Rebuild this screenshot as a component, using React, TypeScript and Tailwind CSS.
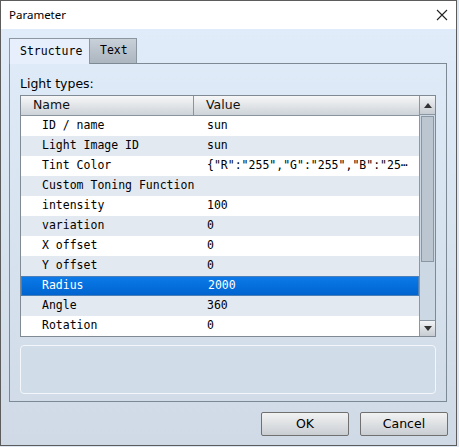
import React from "react";

type Row = { name: string; value: string };

const ROWS: Row[] = [
  { name: "ID / name", value: "sun" },
  { name: "Light Image ID", value: "sun" },
  { name: "Tint Color", value: '{"R":"255","G":"255","B":"25⋯' },
  { name: "Custom Toning Function", value: "" },
  { name: "intensity", value: "100" },
  { name: "variation", value: "0" },
  { name: "X offset", value: "0" },
  { name: "Y offset", value: "0" },
  { name: "Radius", value: "2000" },
  { name: "Angle", value: "360" },
  { name: "Rotation", value: "0" },
];

const SELECTED = 8;

const mono = "font-['DejaVu_Sans_Mono',monospace] text-[11.5px]";
const sans = "font-['DejaVu_Sans',sans-serif]";

function CloseIcon() {
  return (
    <svg width="12" height="12" viewBox="0 0 12 12" fill="none">
      <path d="M1 1 L11 11 M11 1 L1 11" stroke="#222" strokeWidth="1.1" />
    </svg>
  );
}

function Arrow({ down }: { down?: boolean }) {
  return (
    <svg width="8" height="5" viewBox="0 0 8 5">
      <path d={down ? "M0 0 H8 L4 5 Z" : "M0 5 H8 L4 0 Z"} fill="#333" />
    </svg>
  );
}

function Scrollbar() {
  return (
    <div className="w-[16px] border-l border-[#8a96a2] bg-[#ccd8e4] flex flex-col">
      <div className="h-[19px] flex items-center justify-center border-b border-[#8a96a2] bg-gradient-to-b from-[#f2f4f6] to-[#c6ccd2]">
        <Arrow />
      </div>
      <div className="h-[146px] mx-[1px] mt-[1px] border border-[#8a96a2] bg-[#bcc6d0]" />
      <div className="flex-1" />
      <div className="h-[16px] flex items-center justify-center border-t border-[#8a96a2] bg-gradient-to-b from-[#f2f4f6] to-[#c6ccd2]">
        <Arrow down />
      </div>
    </div>
  );
}

function PropertyTable() {
  return (
    <div className="flex h-[242px] border border-[#7f8a94] bg-white">
      <div className="flex-1 flex flex-col">
        <div className={`flex h-[20px] border-b border-[#8a949c] bg-gradient-to-b from-[#f7f7f7] to-[#cdd3d9] text-[12.5px] text-[#111] ${sans}`}>
          <div className="w-[173px] pl-[12px] flex items-center border-r border-[#8a949c]">Name</div>
          <div className="flex-1 pl-[12px] flex items-center">Value</div>
        </div>
        {ROWS.map((r, i) => {
          const sel = i === SELECTED;
          const bg = sel
            ? "bg-gradient-to-b from-[#0b7ae9] to-[#0064cf] text-white border border-[#4a7fb8]"
            : i % 2 === 0
              ? "bg-white text-black"
              : "bg-[#e3e9f1] text-black";
          return (
            <div key={r.name} className={`flex h-[20px] items-center ${mono} ${bg}`}>
              <div className={`w-[173px] ${sel ? "pl-[20px]" : "pl-[21px]"} whitespace-nowrap`}>{r.name}</div>
              <div className="flex-1 pl-[13px] whitespace-nowrap overflow-hidden">{r.value}</div>
            </div>
          );
        })}
      </div>
      <Scrollbar />
    </div>
  );
}

export default function App() {
  return (
    <div className="w-[459px] h-[447px] bg-[#dbe6f2]">
      <div className="w-[457px] h-[446px] border border-[#5c5c5c] flex flex-col bg-gradient-to-b from-[#e2edfb] to-[#cfdae6]">
        {/* title bar */}
        <div className="h-[28px] bg-white flex items-center justify-between pl-[8px] pr-[8px]">
          <span className="font-['Noto_Sans',sans-serif] text-[11.5px] text-black">Parameter</span>
          <CloseIcon />
        </div>

        <div className="flex-1 flex flex-col px-[8px] pt-[9px]">
          {/* tabs */}
          <div className="flex h-[25px] font-['DejaVu_Sans_Mono',monospace] text-[11.5px]">
            <div className="w-[81px] border border-b-0 border-[#8a96a0] bg-[#e6effb] flex items-center pl-[10px] relative z-10 -mb-[1px]">
              Structure
            </div>
            <div className="w-[47px] border border-l-0 border-b-0 border-[#8a96a0] bg-gradient-to-b from-[#c8d0d8] to-[#acb6c0] flex items-center pl-[10px]">
              Text
            </div>
          </div>

          {/* tab page */}
          <div className="h-[339px] mr-[1px] border border-[#7d8994] px-[10px] pt-[12px] flex flex-col">
            <div className={`text-[12.5px] leading-[16px] ${sans} text-black mb-[3px]`}>Light types:</div>
            <PropertyTable />
            <div className="mt-[8px] h-[49px] rounded-[4px] border border-[#f3f7fb] bg-[#d0dce8]" />
          </div>

          {/* buttons */}
          <div className={`flex justify-end gap-[11px] mt-[10px] ${sans} text-[12.5px]`}>
            <button className="w-[88px] h-[24px] rounded-[2px] border border-[#707070] bg-gradient-to-b from-[#f2f2f2] to-[#c9ced3] text-black">
              OK
            </button>
            <button className="w-[88px] h-[24px] rounded-[2px] border border-[#707070] bg-gradient-to-b from-[#f2f2f2] to-[#c9ced3] text-black">
              Cancel
            </button>
          </div>
        </div>
      </div>
    </div>
  );
}
